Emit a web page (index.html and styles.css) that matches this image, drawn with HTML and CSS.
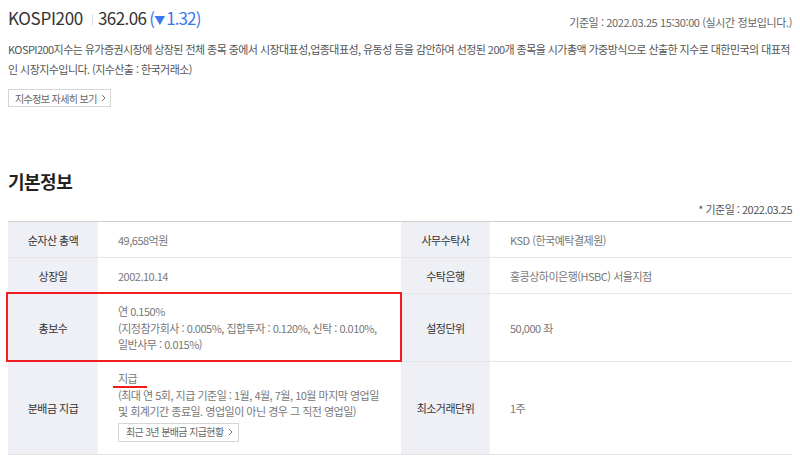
FILE: index.html
```html
<!DOCTYPE html>
<html lang="ko">
<head>
<meta charset="utf-8">
<title>KOSPI200</title>
<link rel="stylesheet" href="styles.css">
</head>
<body>
<div class="page">
  <header class="index-head">
    <div class="index-title">
      <span class="name">KOSPI200</span>
      <span class="sep"></span>
      <span class="price">362.06</span>
      <span class="change">(<span class="tri">▼</span>1.32)</span>
    </div>
    <div class="stamp">기준일 : 2022.03.25 15:30:00 (실시간 정보입니다.)</div>
  </header>
  <p class="desc">KOSPI200지수는 유가증권시장에 상장된 전체 종목 중에서 시장대표성,업종대표성, 유동성 등을 감안하여 선정된 200개 종목을 시가총액 가중방식으로 산출한 지수로 대한민국의 대표적인 시장지수입니다. (지수산출 : 한국거래소)</p>
  <a class="btn" href="#">지수정보 자세히 보기<svg class="chev" width="5" height="8" viewBox="0 0 5 8"><path d="M1 1l3 3-3 3" fill="none" stroke="#777" stroke-width="1"/></svg></a>

  <h2 class="section-title">기본정보</h2>
  <div class="note">* 기준일 : 2022.03.25</div>

  <div class="info">
    <div class="th r1 c1">순자산 총액</div>
    <div class="td r1 c2">49,658억원</div>
    <div class="th r1 c3">사무수탁사</div>
    <div class="td r1 c4">KSD (한국예탁결제원)</div>

    <div class="th r2 c1">상장일</div>
    <div class="td r2 c2">2002.10.14</div>
    <div class="th r2 c3">수탁은행</div>
    <div class="td r2 c4">홍콩상하이은행(HSBC) 서울지점</div>

    <div class="th r3 c1">총보수</div>
    <div class="td r3 c2 multi">연 0.150%<br>(지정참가회사 : 0.005%, 집합투자 : 0.120%, 신탁 : 0.010%,<br>일반사무 : 0.015%)</div>
    <div class="th r3 c3">설정단위</div>
    <div class="td r3 c4">50,000 좌</div>
    <div class="highlight"></div>

    <div class="th r4 c1">분배금 지급</div>
    <div class="td r4 c2 multi"><span class="mark">지급</span><br>(최대 연 5회, 지급 기준일 : 1월, 4월, 7월, 10월 마지막 영업일<br>및 회계기간 종료일. 영업일이 아닌 경우 그 직전 영업일)<br><a class="btn small" href="#">최근 3년 분배금 지급현황<svg class="chev" width="5" height="8" viewBox="0 0 5 8"><path d="M1 1l3 3-3 3" fill="none" stroke="#777" stroke-width="1"/></svg></a></div>
    <div class="th r4 c3">최소거래단위</div>
    <div class="td r4 c4">1주</div>
  </div>
</div>
</body>
</html>
```

FILE: styles.css
```css
* { box-sizing: border-box; }
html, body { margin: 0; padding: 0; background: #fff; }
body {
  font-family: "Noto Sans CJK KR", "Noto Sans", sans-serif;
  color: #666;
  font-size: 11px;
}
.page { padding: 6px 8px 0 8px; }

.index-head {
  display: flex;
  justify-content: space-between;
  align-items: baseline;
}
.index-title {
  display: flex;
  align-items: baseline;
  font-size: 17px;
  line-height: 24px;
  color: #333;
  letter-spacing: -0.3px;
}
.sep {
  width: 1px;
  height: 11px;
  background: #ddd;
  margin: 0 5px 0 9px;
  align-self: center;
}
.price { letter-spacing: -0.6px; }
.change { color: #3a78f0; margin-left: 3px; letter-spacing: -0.9px; }
.tri { font-size: 11px; letter-spacing: 0; margin: 0 1px 0 0; }
.stamp { color: #666; font-size: 11px; letter-spacing: -0.4px; position: relative; top: 2px; }

.desc {
  margin: 7px 0 0 0;
  line-height: 20px;
  color: #555;
  letter-spacing: -0.56px;
}
.btn {
  display: inline-flex;
  align-items: center;
  height: 18px;
  margin-top: 10px;
  padding: 0 4px 0 6px;
  border: 1px solid #d5d5d5;
  color: #666;
  font-size: 10px;
  text-decoration: none;
  letter-spacing: -0.6px;
  white-space: nowrap;
}
.chev { margin-left: 4px; }

.section-title {
  margin: 61px 0 0 0;
  font-size: 18px;
  line-height: 26px;
  font-weight: 700;
  color: #222;
  letter-spacing: -0.5px;
}
.note {
  margin-top: 7px;
  text-align: right;
  line-height: 16px;
  color: #555;
  letter-spacing: -0.5px;
}

.info {
  margin-top: 4px;
  display: grid;
  grid-template-columns: 90px 303px 89px 1fr;
  grid-template-rows: 36px 36px 68px 93px;
  border-top: 1px solid #cfcfcf;
}
.th, .td {
  border-bottom: 1px solid #e6e6e6;
  display: flex;
  align-items: center;
  letter-spacing: -0.5px;
}
.th {
  background: #efeff6;
  color: #333;
  justify-content: center;
}
.td {
  padding-left: 20px;
  color: #777;
}
.r1 { grid-row: 1; }
.r2 { grid-row: 2; }
.r3 { grid-row: 3; }
.r4 { grid-row: 4; }
.c1 { grid-column: 1; }
.c2 { grid-column: 2; }
.c3 { grid-column: 3; }
.c4 { grid-column: 4; }
.td.multi {
  display: block;
  align-self: stretch;
  line-height: 16.5px;
  padding-top: 9px;
}
.td.r4.multi { padding-top: 8px; }
.td.r4 .btn.small { margin-top: 3px; height: 19px; padding: 0 5px 0 7px; }

.mark { position: relative; }
.mark::after {
  content: "";
  position: absolute;
  left: -5px;
  width: 34px;
  bottom: -2px;
  height: 2px;
  background: #ee1c1c;
}

.highlight {
  grid-row: 3;
  grid-column: 1 / 3;
  margin: -2px -1px 0 -2px;
  border: 2px solid #f01e1e;
  pointer-events: none;
}
```
